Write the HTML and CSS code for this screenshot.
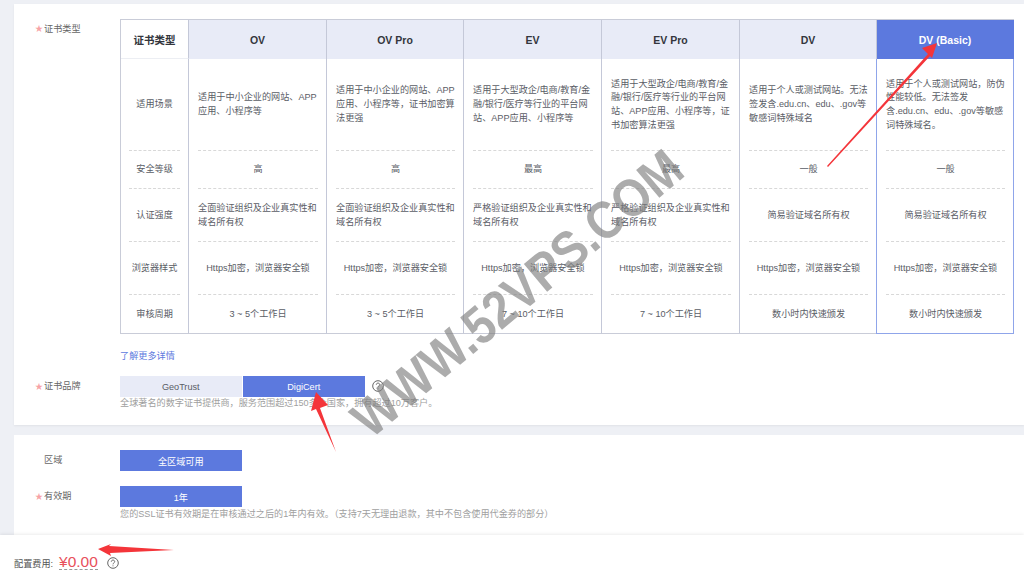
FILE: index.html
```html
<!DOCTYPE html>
<html lang="zh-CN">
<head>
<meta charset="utf-8">
<title>SSL证书配置</title>
<link rel="stylesheet" href="styles.css">
</head>
<body>
<div class="page">
  <section class="card card-top">
    <div class="row">
      <span class="star">★</span><span class="label label-type">证书类型</span>
      <div class="content">
        <div class="spec">
          <div class="head head-first">证书类型</div>
          <div class="head">OV</div>
          <div class="head">OV Pro</div>
          <div class="head">EV</div>
          <div class="head">EV Pro</div>
          <div class="head">DV</div>
          <div class="head head-on">DV (Basic)</div>

          <div class="cell cell-first"><div class="in center">适用场景</div></div>
          <div class="cell"><div class="in">适用于中小企业的网站、APP应用、小程序等</div></div>
          <div class="cell"><div class="in">适用于中小企业的网站、APP应用、小程序等，证书加密算法更强</div></div>
          <div class="cell"><div class="in">适用于大型政企/电商/教育/金融/银行/医疗等行业的平台网站、APP应用、小程序等</div></div>
          <div class="cell"><div class="in">适用于大型政企/电商/教育/金融/银行/医疗等行业的平台网站、APP应用、小程序等，证书加密算法更强</div></div>
          <div class="cell"><div class="in">适用于个人或测试网站。无法签发含.edu.cn、edu、.gov等敏感词特殊域名</div></div>
          <div class="cell cell-on"><div class="in">适用于个人或测试网站，防伪性能较低。无法签发含.edu.cn、edu、.gov等敏感词特殊域名。</div></div>

          <div class="cell cell-first"><div class="in center">安全等级</div></div>
          <div class="cell"><div class="in center">高</div></div>
          <div class="cell"><div class="in center">高</div></div>
          <div class="cell"><div class="in center">最高</div></div>
          <div class="cell"><div class="in center">最高</div></div>
          <div class="cell"><div class="in center">一般</div></div>
          <div class="cell cell-on"><div class="in center">一般</div></div>

          <div class="cell cell-first"><div class="in center">认证强度</div></div>
          <div class="cell"><div class="in">全面验证组织及企业真实性和域名所有权</div></div>
          <div class="cell"><div class="in">全面验证组织及企业真实性和域名所有权</div></div>
          <div class="cell"><div class="in">严格验证组织及企业真实性和域名所有权</div></div>
          <div class="cell"><div class="in">严格验证组织及企业真实性和域名所有权</div></div>
          <div class="cell"><div class="in center">简易验证域名所有权</div></div>
          <div class="cell cell-on"><div class="in center">简易验证域名所有权</div></div>

          <div class="cell cell-first"><div class="in center">浏览器样式</div></div>
          <div class="cell"><div class="in center">Https加密，浏览器安全锁</div></div>
          <div class="cell"><div class="in center">Https加密，浏览器安全锁</div></div>
          <div class="cell"><div class="in center">Https加密，浏览器安全锁</div></div>
          <div class="cell"><div class="in center">Https加密，浏览器安全锁</div></div>
          <div class="cell"><div class="in center">Https加密，浏览器安全锁</div></div>
          <div class="cell cell-on"><div class="in center">Https加密，浏览器安全锁</div></div>

          <div class="cell cell-first cell-last"><div class="in center">审核周期</div></div>
          <div class="cell cell-last"><div class="in center">3 ~ 5个工作日</div></div>
          <div class="cell cell-last"><div class="in center">3 ~ 5个工作日</div></div>
          <div class="cell cell-last"><div class="in center">7 ~ 10个工作日</div></div>
          <div class="cell cell-last"><div class="in center">7 ~ 10个工作日</div></div>
          <div class="cell cell-last"><div class="in center">数小时内快速颁发</div></div>
          <div class="cell cell-last cell-on"><div class="in center">数小时内快速颁发</div></div>
        </div>
        <a class="more" href="#">了解更多详情</a>
      </div>
    </div>
    <div class="row row-brand">
      <span class="star">★</span><span class="label">证书品牌</span>
      <div class="content">
        <div class="options">
          <button class="opt">GeoTrust</button>
          <button class="opt opt-on">DigiCert</button>
          <svg class="help" viewBox="0 0 12 12" aria-hidden="true"><circle cx="6" cy="6" r="5.3"/><path d="M4.3 4.7c0-1 .8-1.6 1.7-1.6s1.7.6 1.7 1.5c0 1.3-1.7 1.3-1.7 2.7"/><path d="M6 8.4v.9"/></svg>
        </div>
        <p class="hint">全球著名的数字证书提供商，服务范围超过150多个国家，拥有超过10万客户。</p>
      </div>
    </div>
  </section>

  <section class="card card-mid">
    <div class="row row-region">
      <span class="star"></span><span class="label">区域</span>
      <div class="content"><button class="opt opt-on">全区域可用</button></div>
    </div>
    <div class="row row-period">
      <span class="star">★</span><span class="label">有效期</span>
      <div class="content">
        <button class="opt opt-on">1年</button>
        <p class="hint hint-period">您的SSL证书有效期是在审核通过之后的1年内有效。（支持7天无理由退款，其中不包含使用代金券的部分）</p>
      </div>
    </div>
  </section>

  <footer class="bar">
    <span class="fee-label">配置费用:</span>
    <span class="price">¥0.00</span>
    <svg class="help" viewBox="0 0 12 12" aria-hidden="true"><circle cx="6" cy="6" r="5.3"/><path d="M4.3 4.7c0-1 .8-1.6 1.7-1.6s1.7.6 1.7 1.5c0 1.3-1.7 1.3-1.7 2.7"/><path d="M6 8.4v.9"/></svg>
  </footer>

  <div class="watermark">WWW.52VPS.COM</div>
  <svg class="arrows" viewBox="0 0 1024 583" aria-hidden="true">
    <polygon points="827,166 928,54 922,48 937,43 932,58 930,56 828,167"/>
    <polygon points="336,452 320,408 328,405 316,392 311,411 316,409"/>
    <polygon points="174,550 109,546 111,544 98,549 111,556 110,553"/>
  </svg>
</div>
</body>
</html>
```
FILE: styles.css
```css
* { box-sizing: border-box; }
html, body { margin: 0; padding: 0; }
body {
  width: 1024px;
  height: 583px;
  overflow: hidden;
  background: #eef0f5;
  font-family: "Liberation Sans", "Noto Sans CJK SC", sans-serif;
  font-size: 9.15px;
  color: #5a5d66;
}
.page { position: relative; width: 1024px; height: 583px; overflow: hidden; padding-top: 4px; }

.card { background: #fff; margin-left: 14px; }
.card-top { height: 421px; padding-top: 15px; box-shadow: 0 1px 2px rgba(0,0,0,.06); }
.card-mid { height: 100px; margin-top: 10px; padding-top: 15px; }

.row { display: flex; padding-left: 21px; }
.star { width: 9px; flex: none; color: #f7a3a6; font-size: 8px; line-height: 20px; }
.label { width: 76px; flex: none; line-height: 20px; color: #666; }
.label-type { line-height: 20px; }
.content { flex: none; }

.spec {
  display: grid;
  width: 894px;
  grid-template-columns: 68px 138px 137px 138px 138px 137px 137px;
  grid-template-rows: 39px 92px 38px 53px 53px 39px;
  border-top: 1px solid #c9ccd8;
  border-left: 1px solid #c9ccd8;
}
.head {
  display: flex;
  align-items: center;
  justify-content: center;
  background: #e8ebf7;
  border-right: 1px solid #c4c8d8;
  font-size: 10.5px;
  font-weight: 700;
  color: #33363d;
}
.head-first { background: #fff; border-bottom: 1px solid #eceef3; }
.head-on { background: #5c79de; border-right-color: #5c79de; color: #fff; }

.cell { padding: 0 8px 0 9px; border-right: 1px solid #c4c8d8; min-width: 0; }
.cell-first { padding: 0 8px; }
.cell-last { border-bottom: 1px solid #c9ccd8; }
.cell-on { border-left: 1px solid #8fa5ea; border-right-color: #8fa5ea; margin-left: -1px; }
.cell-on.cell-last { border-bottom-color: #8fa5ea; }
.in {
  display: flex;
  align-items: center;
  height: 100%;
  padding-top: 1px;
  line-height: 13.7px;
  border-bottom: 1px dashed #d8d8d8;
}
.cell-last .in { border-bottom: 0; }
.center { justify-content: center; text-align: center; }

.more { display: block; margin-top: 15px; line-height: 14px; color: #5c79de; text-decoration: none; }

.row-brand { margin-top: 13px; }
.row-brand .label, .row-brand .star { line-height: 21px; }
.options { display: flex; align-items: center; gap: 1.5px; }
.opt {
  display: block;
  width: 121.5px;
  height: 21px;
  padding: 0;
  border: 0;
  background: #e8ebf7;
  font: inherit;
  color: #5a5d66;
}
.opt-on { background: #5c79de; color: #fff; }
.help {
  width: 12px;
  height: 12px;
  fill: none;
  stroke: #666;
  stroke-width: 1;
}
.options .help { margin-left: 6px; margin-bottom: 2px; }
.hint { margin: 0; line-height: 13px; color: #a0a0a0; }
.hint-period { margin-top: 1px; }

.row-region .label, .row-region .star { line-height: 21px; }
.row-period { margin-top: 15px; }
.row-period .label, .row-period .star { line-height: 21px; }

.bar {
  position: relative;
  display: flex;
  align-items: flex-end;
  height: 48px;
  padding: 0 0 12px 14px;
  background: #fff;
  box-shadow: 0 -1px 3px rgba(0,0,0,.08);
}
.fee-label { line-height: 13px; color: #555; }
.price {
  margin-left: 6px;
  margin-bottom: 1px;
  font-size: 15.5px;
  line-height: 14px;
  color: #e8505b;
  border-bottom: 1px dashed #999;
}
.bar .help { margin-left: 9px; margin-bottom: 2px; }

.watermark {
  position: absolute;
  left: 517px;
  top: 293px;
  transform: translate(-50%, -50%) rotate(-40deg) scale(1, 1.12);
  font-size: 47px;
  font-weight: 700;
  line-height: 1;
  white-space: nowrap;
  color: rgba(125,125,125,.64);
  pointer-events: none;
}
.arrows { position: absolute; left: 0; top: 0; width: 1024px; height: 583px; fill: #f4353a; pointer-events: none; }
```
